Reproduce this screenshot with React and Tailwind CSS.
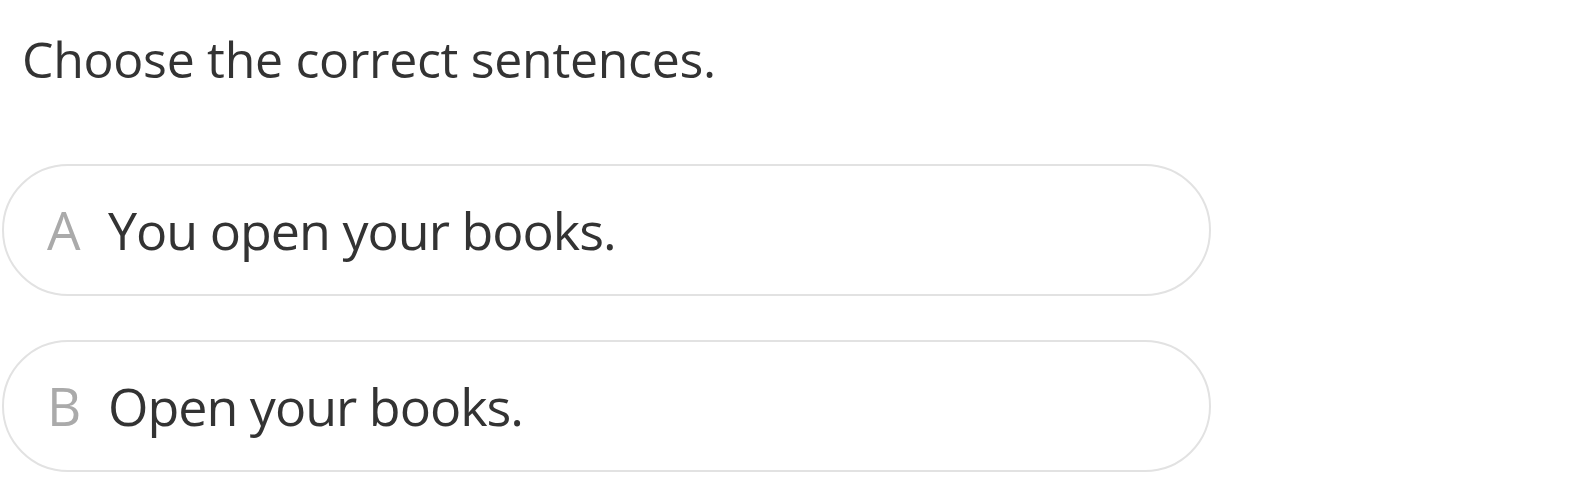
import React from 'react';

const options = [
  { letter: 'A', text: 'You open your books.' },
  { letter: 'B', text: 'Open your books.' },
];

const App = () => {
  return (
    <div className="min-h-screen bg-white pt-[25px] font-['Open_Sans',sans-serif] text-[#333333]">
      <h1 className="pl-[22px] text-[50px] leading-[68px] font-normal tracking-[-0.3px]">Choose the correct sentences.</h1>

      <div className="mt-[71px] flex flex-col gap-[44px] pl-[2px]">
        {options.map((opt) => (
          <div
            key={opt.letter}
            className="flex h-[132px] w-[1209px] items-center rounded-full border-2 border-[#e2e2e2] pl-[43px]"
          >
            <span className="w-[61px] text-[53px] text-[#aaaaaa]">{opt.letter}</span>
            <span className="text-[52px] tracking-[-1px]">{opt.text}</span>
          </div>
        ))}
      </div>
    </div>
  );
};

export default App;
